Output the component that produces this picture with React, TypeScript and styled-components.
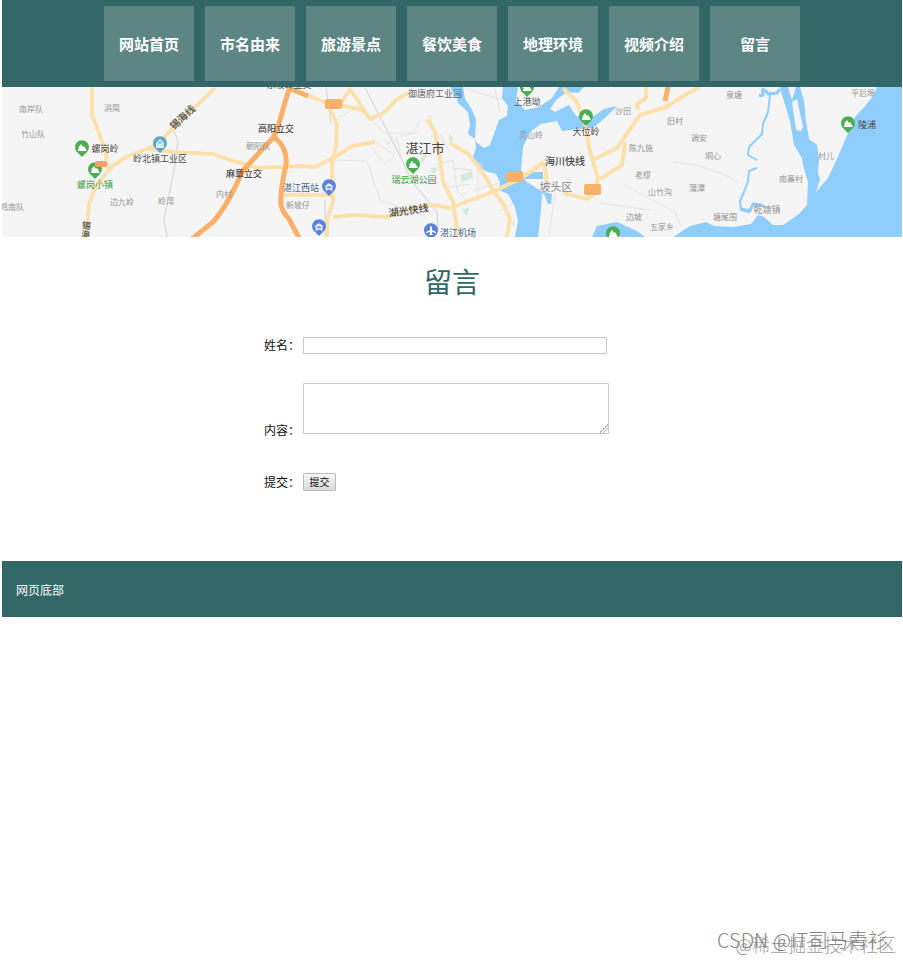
import React from "react";
import styled, { createGlobalStyle } from "styled-components";

const GlobalStyle = createGlobalStyle`
  * { box-sizing: border-box; }
  body {
    margin: 0;
    background: #fff;
    color: #111;
    font: 12px/18px "Noto Sans CJK SC", sans-serif;
  }
`;

const Page = styled.div`
  position: relative;
  min-height: 100vh;
  padding: 0 1px 0 2px;
`;

const Nav = styled.nav`
  display: flex;
  justify-content: center;
  gap: 11px;
  padding: 6px 0;
  background: #336666;
`;

const NavLink = styled.a`
  width: 90px;
  line-height: 75px;
  text-align: center;
  font-size: 15px;
  font-weight: 700;
  color: #fff;
  text-decoration: none;
  background: #5c8583;
`;

const Banner = styled.svg`
  display: block;
  width: 100%;
  height: 150px;
  background: #f5f5f5;
`;

const Form = styled.form`
  display: flex;
  flex-direction: column;
  align-items: center;
  padding: 24px 0 70px;
`;

const Title = styled.h1`
  margin: 0 0 35px;
  font-size: 28px;
  line-height: 40px;
  font-weight: 400;
  color: #336666;
`;

const Fields = styled.div`
  display: grid;
  grid-template-columns: 39px 306px;
  row-gap: 29px;
  align-items: end;
  margin-right: 31px;
`;

const Label = styled.label`
  white-space: nowrap;
`;

const TextInput = styled.input`
  width: 304px;
  height: 17px;
  padding: 1px 2px;
  border: 1px solid #c8c8c8;
  background: #fff;
  font: inherit;
  line-height: 14px;
`;

const TextArea = styled.textarea`
  display: block;
  width: 306px;
  height: 51px;
  margin-bottom: 5px;
  padding: 2px;
  border: 1px solid #c8c8c8;
  border-radius: 1px;
  background: #fff;
  font: inherit;
  resize: both;

  &::-webkit-resizer {
    background: linear-gradient(135deg, #fff 50%, #aaa 50%, #aaa 57%, #fff 57%, #fff 70%, #aaa 70%, #aaa 77%, #fff 77%)
      right bottom / 9px 9px no-repeat;
  }
`;

const SubmitButton = styled.button`
  justify-self: start;
  width: 33px;
  height: 18px;
  margin-top: 5px;
  padding: 0;
  border: 1px solid #bcbcbc;
  border-radius: 1px;
  background: linear-gradient(#f5f5f5, #dcdcdc);
  color: #111;
  font: inherit;
  font-size: 10px;
  line-height: 16px;
`;

const Footer = styled.footer`
  padding: 20px 14px 18px;
  color: #fff;
  background: #336666;
`;

const Watermark = styled.div`
  position: absolute;
  right: 15px;
  bottom: 6px;
  font-size: 20px;
  font-weight: 300;
  line-height: 28px;
  white-space: nowrap;
  color: #858585;
`;

const CommunityMark = styled(Watermark)`
  right: 7px;
  bottom: 2px;
  font-size: 18px;
  color: #9c9c9c;
`;

const navItems = ["网站首页", "市名由来", "旅游景点", "餐饮美食", "地理环境", "视频介绍", "留言"];

type Place = { text: string; x: number; y: number; size?: number; color?: string; turn?: number; weight?: number };

const dark = "#4a4a4a";
const grey = "#949494";
const blue = "#47688f";
const green = "#3f9a3f";

const places: Place[] = [
  { text: "南岸队", x: 31, y: 112, color: grey },
  { text: "消简", x: 112, y: 111, color: grey },
  { text: "竹山队", x: 33, y: 137, color: grey },
  { text: "螺岗岭", x: 105, y: 152, size: 9, color: dark },
  { text: "螺岗小镇", x: 95, y: 188, size: 9, color: green },
  { text: "岭北镇工业区", x: 160, y: 162, size: 9, color: dark },
  { text: "边九岭", x: 122, y: 205, color: grey },
  { text: "岭湾", x: 166, y: 204, color: grey },
  { text: "鸡南队", x: 12, y: 210, color: grey },
  { text: "内村", x: 224, y: 197, color: grey },
  { text: "锡海线", x: 185, y: 120, size: 10, color: dark, turn: -43, weight: 500 },
  { text: "锡", x: 86, y: 229, size: 9, color: dark, turn: 8, weight: 500 },
  { text: "海", x: 85, y: 238, size: 9, color: dark, turn: 8, weight: 500 },
  { text: "东坡岭立交", x: 289, y: 88, size: 9, color: dark },
  { text: "高阳立交", x: 276, y: 132, size: 9, color: dark, weight: 500 },
  { text: "朝阳队", x: 258, y: 149, color: grey },
  { text: "麻章立交", x: 244, y: 177, size: 9, color: dark, weight: 500 },
  { text: "湛江西站", x: 301, y: 191, size: 9, color: blue },
  { text: "新坡仔", x: 298, y: 208, color: grey },
  { text: "湖光快线", x: 409, y: 214, size: 10, color: dark, turn: -8, weight: 500 },
  { text: "御唐府工业园", x: 435, y: 97, size: 9, color: "#666" },
  { text: "湛江市", x: 425, y: 153, size: 13, color: "#444" },
  { text: "瑞云湖公园", x: 414, y: 183, size: 9, color: green },
  { text: "湛江机场", x: 458, y: 236, size: 9, color: blue },
  { text: "上港坳", x: 527, y: 105, size: 9, color: "#5c6468" },
  { text: "灵山岭", x: 531, y: 138, color: grey },
  { text: "大位岭", x: 586, y: 135, size: 9, color: dark },
  { text: "海川快线", x: 565, y: 165, size: 10, color: dark, weight: 500 },
  { text: "坡头区", x: 556, y: 191, size: 11, color: "#888" },
  { text: "沙田", x: 623, y: 114, color: grey },
  { text: "旧村", x: 675, y: 124, color: grey },
  { text: "陈九施", x: 641, y: 151, color: grey },
  { text: "老缪", x: 643, y: 178, color: grey },
  { text: "山竹沟", x: 660, y: 195, color: grey },
  { text: "边坡", x: 634, y: 220, color: grey },
  { text: "五家乡", x: 662, y: 230, color: grey },
  { text: "泉塘", x: 734, y: 98, color: grey },
  { text: "调安", x: 699, y: 141, color: grey },
  { text: "垌心", x: 713, y: 159, color: grey },
  { text: "蒲潭", x: 697, y: 191, color: grey },
  { text: "塘尾围", x: 725, y: 220, color: grey },
  { text: "乾塘镇", x: 767, y: 213, size: 9, color: grey },
  { text: "南寨村", x: 791, y: 182, color: grey },
  { text: "村儿", x: 826, y: 159, color: grey },
  { text: "平后埠", x: 863, y: 96, color: grey },
  { text: "陵浦", x: 867, y: 128, size: 9, color: dark },
];

type PinKind = "tree" | "building" | "station" | "plane";

const pinFill: Record<PinKind, string> = { tree: "#4bae55", building: "#56a7cb", station: "#5b83dc", plane: "#5b83dc" };

const pinGlyph: Record<PinKind, React.ReactNode> = {
  tree: <path d="M-1-4 L1-1 L2-2 L5 3 H-4 V2 L-3 0 H-4Z" fill="#fff" />,
  building: <path d="M-3 3V-1L0-4L3-1V3M-1 3V0H1V3M-4 3H4" fill="none" stroke="#fff" strokeWidth="1.3" />,
  station: <path d="M-3 1V-1L0-3L3-1V1L0 2ZM-2-1H2M-2 2L-3 4M2 2L3 4" fill="none" stroke="#fff" strokeWidth="1.2" />,
  plane: <path d="M0-5L1-4V-1L5 1V2L1 1V3L2 4H-2L-1 3V1L-5 2V1L-1-1V-4Z" fill="#fff" />,
};

const pins: { kind: PinKind; x: number; y: number }[] = [
  { kind: "tree", x: 82, y: 148 },
  { kind: "tree", x: 95, y: 170 },
  { kind: "building", x: 160, y: 144 },
  { kind: "station", x: 329, y: 187 },
  { kind: "station", x: 319, y: 227 },
  { kind: "tree", x: 413, y: 165 },
  { kind: "plane", x: 431, y: 231 },
  { kind: "tree", x: 527, y: 88 },
  { kind: "tree", x: 586, y: 117 },
  { kind: "tree", x: 613, y: 234 },
  { kind: "tree", x: 848, y: 124 },
];

function CityMap() {
  return (
    <Banner viewBox="2 87 900 150" preserveAspectRatio="xMidYMid slice" role="img" aria-label="湛江市地图">
      <g fill="#8fcdfc">
        <path d="M503 87L502 98L508 106L507 116L499 120L490 145L484 148L477 143L475 139L476 148L473 157L476 166L488 172L496 174L500 182L499 190L508 194L515 207L518 221L515 237H538L541 209L542 193L530 188L524 178L521 170L523 147L530 132L541 124L557 121L562 131L577 129L593 128L606 117L617 106L604 109L591 118L576 116L569 105L555 112L550 109L557 99L567 92L578 93L584 87H559L552 98L539 107L525 110L516 101L518 87Z" />
        <path d="M450 87L456 95L458 103L468 112L470 125L468 134L475 139L476 119L471 108L465 99L463 87Z" />
        <path d="M523 176L533 172H543V179L524 179ZM527 182L541 191L552 194L551 204L548 204L544 194L530 189Z" />
        <path d="M592 237L597 226L617 222L637 231L645 237ZM673 237L690 226L706 222L714 226L733 227L751 224L758 215L764 217L773 225L783 225L799 214L807 205L808 182L803 165L802 158L794 145L790 121L783 98L780 87H788L792 100L796 87H800L804 101L806 121L809 139L817 145L819 160L818 173L820 179L816 192L828 178L836 161L846 138L855 117L866 105L873 96L877 87H904V237Z" />
      </g>
      <path d="M792 102L797 99L803 127L801 131L796 130Z" fill="#f5f5f5" />
      <g fill="none" stroke="#8fcdfc" strokeLinejoin="round">
        <path d="M761 91L766 91L768 94L777 93L780 89M763 88V95L759 96" strokeWidth="3" />
        <path d="M770 95L768 112L763 124L762 134L749 147L748 155L757 160M757 168L749 171L748 181L744 192L740 201L741 210L749 212L753 204L764 206" strokeWidth="2" />
        <path d="M741 209L750 211L753 204L762 205" strokeWidth="3" />
      </g>
      <g fill="#d6eadc">
        <path d="M461 175L472 171L473 178L461 182ZM462 209L470 208L466 216ZM449 134L454 138L449 145ZM515 220L511 223L514 226ZM420 160L425 153L427 156L421 165ZM431 168L437 167L436 173H432Z" />
      </g>
      <g fill="none" stroke="#e4e4e4" strokeWidth="1">
        <path d="M326 87L331 124M365 88L376 109L402 160L411 180L437 212L438 231M325 200V237M173 128L178 141L175 166L164 219L167 237" stroke="#d2d2d2" />
        <path d="M335 160L367 161L380 200L425 216M340 117L358 106L384 133H413L420 120M376 143L395 155L384 165M400 136L419 132M430 115L433 130L445 145M430 137L440 134L449 150M450 168L473 170M445 188L470 184M438 165L453 160L457 190L468 202M478 167L478 201M386 145L397 138L401 157M372 148L382 161M384 139L391 145" />
        <path d="M465 88L486 95L503 100M495 90L500 112M673 162L695 165L721 173L738 182M555 193L549 237M570 177L565 188M624 185L675 212L681 226M600 203L650 210M470 158L482 165L483 176M473 190L500 183M513 203L500 211" />
      </g>
      <g fill="none" stroke="#fde1ad" strokeLinejoin="round" strokeWidth="4">
        <path d="M92 87V115L100 136L106 153L107 168" />
        <path d="M215 88L170 131L157 145L126 157L110 168L96 186L89 204L86 237M148 149L173 152L213 154L230 160L258 168L300 166L315 167L338 155L352 146L375 142" />
        <path d="M307 95L325 102L362 110L371 119L386 111L396 100L408 93M340 105L350 89L370 119M328 105L337 124L336 145L332 165L333 202L327 220V237M283 195H334M333 217L354 215L388 217L412 208L434 205L450 208L490 193L520 179L544 162M427 119L435 132L440 158L443 182L453 202L458 237" />
        <path d="M450 143L468 154L478 166L486 178L493 190L503 204L510 218L507 237M544 162L547 182M563 88L577 102L586 126L589 148L598 178L594 194L587 199L563 193M593 160L617 148L640 115L666 107L690 92L700 87M638 110L637 104L646 98V87M625 142L622 165L600 179" />
      </g>
      <g fill="none" stroke="#fbb06a" strokeWidth="5">
        <path d="M192 239L213 222Q228 205 242 172Q254 158 273 138Q279 126 285 102L290 87M274 137Q288 148 286 165Q280 190 281 205Q283 213 289 219L299 238M291 89L308 96M668 87L665 101" />
      </g>
      <g fill="#fbb06a">
        <rect x="325" y="99" width="17" height="10" rx="2" />
        <rect x="506" y="171" width="17" height="11" rx="2" />
        <rect x="584" y="184" width="17" height="11" rx="2" />
      </g>
      {pins.map((pin) => (
        <g key={`${pin.x}-${pin.y}`} transform={`translate(${pin.x} ${pin.y})`}>
          <path d="M0 9L-4 5A7 7 0 1 1 4 5Z" fill={pinFill[pin.kind]} />
          {pinGlyph[pin.kind]}
        </g>
      ))}
      <rect x="95" y="161" width="12" height="6" rx="2" fill="#f3a06c" />
      <g textAnchor="middle">
        {places.map((place) => (
          <text
            key={place.text}
            x={place.x}
            y={place.y}
            fontSize={place.size ?? 8}
            fontWeight={place.weight ?? 400}
            fill={place.color}
            transform={place.turn ? `rotate(${place.turn} ${place.x} ${place.y})` : undefined}
          >
            {place.text}
          </text>
        ))}
      </g>
    </Banner>
  );
}

export default function App() {
  return (
    <Page>
      <GlobalStyle />
      <Nav>
        {navItems.map((item) => (
          <NavLink key={item} href="#">{item}</NavLink>
        ))}
      </Nav>
      <CityMap />
      <Form onSubmit={(event) => event.preventDefault()}>
        <Title>留言</Title>
        <Fields>
          <Label htmlFor="name">姓名：</Label>
          <TextInput id="name" type="text" />
          <Label htmlFor="content">内容：</Label>
          <TextArea id="content" />
          <Label htmlFor="submit">提交：</Label>
          <SubmitButton id="submit" type="submit">提交</SubmitButton>
        </Fields>
      </Form>
      <Footer>网页底部</Footer>
      <CommunityMark>@稀土掘金技术社区</CommunityMark>
      <Watermark>CSDN @IT司马青衫</Watermark>
    </Page>
  );
}
